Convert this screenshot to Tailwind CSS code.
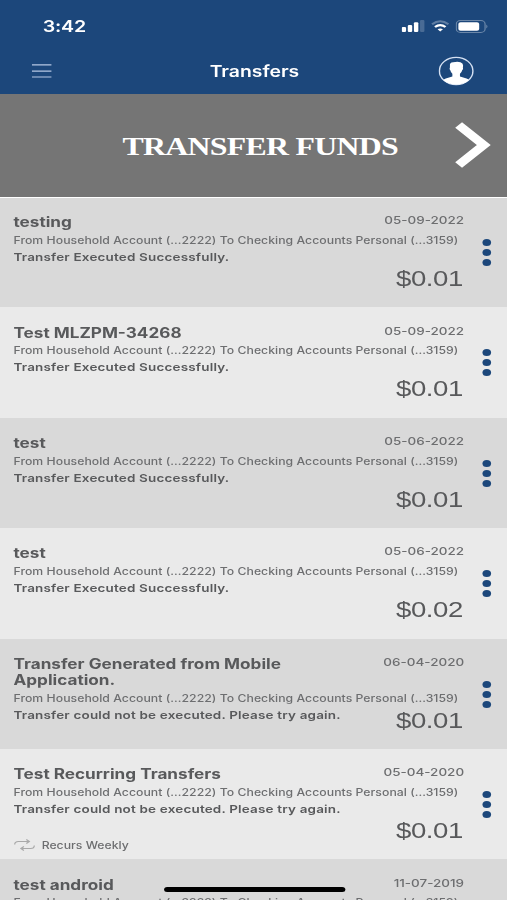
<!DOCTYPE html>
<html lang="en">
<head>
    <meta charset="UTF-8">
    <meta name="viewport" content="width=device-width, initial-scale=1.0">
    <title>Transfers</title>
    <script src="https://cdn.jsdelivr.net/npm/@tailwindcss/browser@4"></script>
</head>
<body class="w-[507px] h-[900px] overflow-hidden bg-[#d9d9d9]">
    <!-- 414pt wide screen, stretched to the window width -->
    <div class="relative w-[414px] h-[900px] overflow-hidden origin-top-left scale-x-[1.2246] font-[Inter,'Liberation_Sans',sans-serif] text-[#58595b]">
        <!-- Header -->
        <header class="h-[94px] bg-[#1c477b] text-white">
            <div class="flex items-center justify-between h-[52px] pl-[35px] pr-[15px]">
                <span class="text-[16px] leading-none font-semibold tracking-[-0.2px]">3:42</span>
                <div class="flex items-center gap-[5px]">
                    <svg class="w-[19px] h-[12px]" viewBox="0 0 19 12" fill="#fff">
                        <rect x="0" y="7" width="3.6" height="5" rx="1" />
                        <rect x="5" y="5" width="3.6" height="7" rx="1" />
                        <rect x="10" y="2.3" width="3.6" height="9.7" rx="1" />
                        <rect x="15" y="0" width="3.6" height="12" rx="1" opacity=".2" />
                    </svg>
                    <svg class="w-[15px] h-[12px]" viewBox="0 0 15 12" fill="none" stroke="#fff" stroke-width="2">
                        <path d="M.8 4.2Q7.5-1.6 14.2 4.2" opacity=".3" />
                        <path d="M3.2 7Q7.5 3.2 11.8 7" />
                        <path d="M7.5 11.6L5.3 9.3Q7.5 7.6 9.7 9.3Z" fill="#fff" stroke="none" />
                    </svg>
                    <svg class="w-[27px] h-[13px]" viewBox="0 0 27 13">
                        <rect x=".6" y=".6" width="23.5" height="11.8" rx="3.4" fill="none" stroke="#fff" stroke-opacity=".35" />
                        <rect x="2.3" y="2.2" width="17" height="8.6" rx="1.8" fill="#fff" />
                        <path d="M25.2 4.5q1.6 2 0 4z" fill="#fff" opacity=".45" />
                    </svg>
                </div>
            </div>
            <div class="grid grid-cols-3 items-center h-[38px] pl-[25.5px] pr-[27px]">
                <svg class="w-[16.5px] h-[15px]" viewBox="0 0 16 15" preserveAspectRatio="none" stroke="#b5c8e4" stroke-width="1.2">
                    <path d="M0 .8h16M0 7.2h16M0 13h16" />
                </svg>
                <h1 class="pl-[3px] pt-[1.5px] text-center text-[15.8px] leading-none font-semibold">Transfers</h1>
                <svg class="justify-self-end w-[29px] h-[30px]" viewBox="0 0 29 30">
                    <circle cx="14.5" cy="15" r="13.7" fill="none" stroke="#d4e0f2" stroke-width="1.2" />
                    <path d="M9.4 10Q9 6.2 12 6.2Q18 5 19.6 7.5Q20.5 9 20 11.5Q20.6 13 19.4 14.3Q19 16.6 17.6 17.8V20.5L23 22.5Q24.6 23.3 24.9 24.3Q20.8 28.6 14.500 28.6T4.1 24.3Q4.400 23.3 6 22.5L11.4 20.5V17.8Q10.2 16.6 9.7 14.3Q8.6 13 9.4 11.5Z" fill="#fff" />
                </svg>
            </div>
        </header>

        <!-- Transfer funds button -->
        <button class="relative flex items-center justify-center w-full h-[103px] pl-[11px] pt-[2px] bg-[#757575] text-white">
            <span class="font-['Liberation_Serif',serif] font-bold text-[26px] leading-none tracking-[-0.6px]">TRANSFER FUNDS</span>
            <svg class="absolute right-[13px] top-[27px] w-[30px] h-[48px]" viewBox="0 0 30 48" fill="none" stroke="#fff" stroke-width="8">
                <path d="M3.5 4L24 24L3.5 44" />
            </svg>
        </button>

        <ul id="transfers"></ul>

        <!-- Home indicator -->
        <div class="absolute left-[133.5px] top-[887px] w-[148px] h-[5px] rounded-full bg-black"></div>
    </div>

    <script>
        const transfers = [
            { title: 'testing', date: '05-09-2022', status: 'Transfer Executed Successfully.', amount: '$0.01' },
            { title: 'Test MLZPM-34268', date: '05-09-2022', status: 'Transfer Executed Successfully.', amount: '$0.01' },
            { title: 'test', date: '05-06-2022', status: 'Transfer Executed Successfully.', amount: '$0.01' },
            { title: 'test', date: '05-06-2022', status: 'Transfer Executed Successfully.', amount: '$0.02' },
            { title: 'Transfer Generated from Mobile Application.', date: '06-04-2020', status: 'Transfer could not be executed. Please try again.', amount: '$0.01' },
            { title: 'Test Recurring Transfers', date: '05-04-2020', status: 'Transfer could not be executed. Please try again.', amount: '$0.01', recurs: 'Recurs Weekly' },
            { title: 'test android', date: '11-07-2019', status: 'Transfer Executed Successfully.', amount: '$0.01' },
        ];

        const recurIcon = `
            <svg class="w-[18px] h-[12px]" viewBox="0 0 18 12" fill="none" stroke="#a9a9a9" stroke-width="1">
                <path d="M1 5.5Q1 2.5 4 2.5H13M10.5 .5L13 2.5L10.5 4.5M17 6.5Q17 9.5 14 9.5H6M8.5 7.5L6 9.5L8.5 11.5" />
            </svg>`;

        document.getElementById('transfers').innerHTML = transfers.map((t) => `
            <li class="flex h-[110.4px] odd:bg-[#d9d9d9] even:bg-[#eaeaea]">
                <div class="relative flex flex-col w-[379px] pl-[11px] pt-[17.3px]">
                    <div class="flex justify-between">
                        <h2 class="w-[240px] text-[14px] leading-[16.5px] font-bold">${t.title}</h2>
                        <time class="text-[11px] leading-[12px] font-medium text-[#6d6e70]">${t.date}</time>
                    </div>
                    <p class="mt-[2px] text-[10px] leading-[15px] whitespace-nowrap font-medium text-[#6d6e70] tracking-[0.025px]">From Household Account (...2222) To Checking Accounts Personal (...3159)</p>
                    <p class="mt-[1px] text-[11px] leading-[16px] font-semibold tracking-[0.15px]">${t.status}</p>
                    <span class="absolute right-[1px] top-[68px] text-[22.5px] leading-[28px] font-[Liberation_Sans,sans-serif] tracking-[-0.35px]">${t.amount}</span>
                    ${t.recurs ? `<div class="flex items-center gap-[5px] mt-auto pb-[7px] text-[10px] leading-[14px] font-medium text-[#6d6e70]">${recurIcon}${t.recurs}</div>` : ''}
                </div>
                <button class="flex flex-col gap-[3px] ml-[14.5px] mt-[42px]">
                    <span class="w-[7px] h-[7px] rounded-full bg-[#1c477b]"></span>
                    <span class="w-[7px] h-[7px] rounded-full bg-[#1c477b]"></span>
                    <span class="w-[7px] h-[7px] rounded-full bg-[#1c477b]"></span>
                </button>
            </li>`).join('');
    </script>
</body>
</html>
